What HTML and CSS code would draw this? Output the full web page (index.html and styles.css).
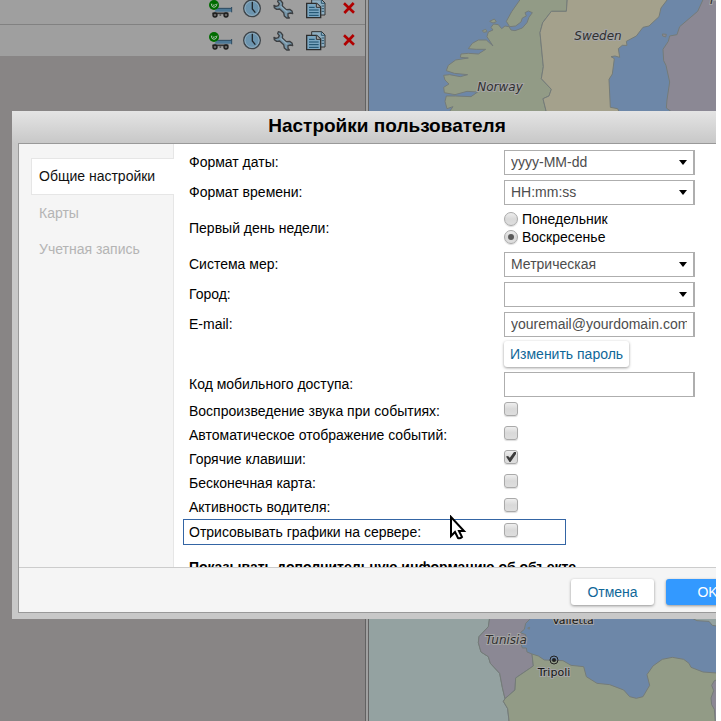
FILE: index.html
```html
<!DOCTYPE html>
<html lang="ru">
<head>
<meta charset="utf-8">
<title>Настройки пользователя</title>
<link rel="stylesheet" href="styles.css">
</head>
<body>
<svg class="defs" aria-hidden="true">
  <symbol id="i-truck" viewBox="0 0 96 93">
    <path d="M28 56l8-11h42v-3h3v14z" fill="#4d7896"/>
    <path d="M38 46h42M80 42v16" stroke="#304b5f" stroke-width="3"/>
    <path d="M22 61h48" stroke="#333" stroke-width="5"/>
    <circle cx="30" cy="66" r="6" fill="#666" stroke="#1c1c1c" stroke-width="4"/>
    <circle cx="46" cy="66" r="3" fill="#555"/>
    <circle cx="63" cy="66" r="6" fill="#666" stroke="#1c1c1c" stroke-width="4"/>
    <circle cx="27" cy="36" r="15" fill="#006b00"/>
    <path d="M19 32q0 11 8 11t9-11M23 34l4 4 5-5" fill="none" stroke="#a9c4a9" stroke-width="3"/>
  </symbol>
  <symbol id="i-clock" viewBox="0 0 96 93">
    <circle cx="45" cy="46" r="25" fill="#6c94ae" stroke="#3e4449" stroke-width="4"/>
    <circle cx="45" cy="46" r="21" fill="none" stroke="#8facbe" stroke-width="3"/>
    <path d="M46 26v22l9 11" fill="none" stroke="#20272c" stroke-width="4"/>
  </symbol>
  <symbol id="i-wrench" viewBox="0 0 96 93">
    <path d="M28 20l7 2 6 8-1 9 12 11 10-1 7 5 2 8-7-2-7 2v8l4 5-8 0-7-6-2-10-12-11-9 1-7-5-1-7 6 3 7-2 3-6-5-6z" fill="#7695a8" stroke="#3c3f42" stroke-width="4" stroke-linejoin="round"/>
    <path d="M35 40l20 18" stroke="#8fadbe" stroke-width="4"/>
  </symbol>
  <symbol id="i-docs" viewBox="0 0 96 93">
    <path d="M32 20h30l10 10v36H32z" fill="#8fafc2" stroke="#343434" stroke-width="3"/>
    <path d="M61 20v11h11M62 39h7M62 47h7M62 55h7" fill="none" stroke="#2d566d" stroke-width="3"/>
    <path d="M17 31h30l12 11v32H17z" fill="#7aa6c1" stroke="#2d2d2d" stroke-width="4"/>
    <path d="M46 31v12h12" fill="#aaa" stroke="#333" stroke-width="3"/>
    <path d="M24 43h17M24 51h29M24 59h29M24 67h29" stroke="#164a68" stroke-width="3"/>
  </symbol>
  <symbol id="i-delete" viewBox="0 0 96 93">
    <path d="M33 31l30 28M62 30L34 60" stroke="#b00000" stroke-width="8"/>
  </symbol>
</svg>

<div class="app">
  <section class="units">
    <div class="unit">
      <button class="tool" aria-label="Состояние"><svg><use href="#i-truck"/></svg></button>
      <button class="tool" aria-label="История"><svg><use href="#i-clock"/></svg></button>
      <button class="tool" aria-label="Свойства"><svg><use href="#i-wrench"/></svg></button>
      <button class="tool" aria-label="Копировать"><svg><use href="#i-docs"/></svg></button>
      <button class="tool" aria-label="Удалить"><svg><use href="#i-delete"/></svg></button>
    </div>
    <div class="unit">
      <button class="tool" aria-label="Состояние"><svg><use href="#i-truck"/></svg></button>
      <button class="tool" aria-label="История"><svg><use href="#i-clock"/></svg></button>
      <button class="tool" aria-label="Свойства"><svg><use href="#i-wrench"/></svg></button>
      <button class="tool" aria-label="Копировать"><svg><use href="#i-docs"/></svg></button>
      <button class="tool" aria-label="Удалить"><svg><use href="#i-delete"/></svg></button>
    </div>
  </section>
  <div class="splitter"></div>
  <section class="map">
    <svg viewBox="0 0 347 721" preserveAspectRatio="xMinYMin slice">
      <rect width="347" height="721" fill="#6d87a8"/>
      <g transform="translate(-8 0) scale(.33333)" stroke="#747b78" stroke-width="3" stroke-linejoin="round">
        <path fill="#929b86" d="M480-5L452 35L436 64L446 80L464 78L480 66L484 54L496 48L492 38L502 33L514 38L504 52L498 68L484 84L462 92L450 90L444 80L432 78L422 86L412 74L398 72L390 82L396 90L382 96L378 110L396 138L376 120L352 120L334 130L322 146L346 148L374 148L352 162L322 160L300 162L298 172L322 174L284 180L262 196L256 212L280 220L320 224L298 230L266 224L248 226L252 240L264 252L248 262L250 278L282 284L318 274L350 276L330 290L284 288L256 288L252 304L258 326L276 320L262 340H557L546 296L564 288L571 268L541 236L547 200L537 98L545 68L571 34H616L619-5z"/>
        <path fill="#929b86" d="M386 64l14-7 6 8-10 4zM364 92l10-4 4 7-10 2z"/>
        <path fill="#a4a18c" d="M619-5L616 34H571L545 68L537 98L547 200L541 236L571 268L564 288L546 296L557 340H776L770 326L748 322L744 238L754 222L760 176L750 170L762 168L776 172L772 146L784 136L798 136L796 124L826 108L846 82L864 78L894 50L900 24L922-5z"/>
        <path fill="#8b8894" d="M1028-5L1010 34L956 80L948 104L926 108L922 124L906 148L908 182L915 196L926 246L918 300L916 324L938 340H1080V-5z"/>
        <path fill="#8b8894" d="M904 102l12 1-2 8-9-3z"/>
      </g>
      <g transform="translate(-8 560) scale(.33333)" stroke="#747b78" stroke-width="3" stroke-linejoin="round">
        <path fill="#94a2a1" d="M0 160H388L382 200L354 230L352 248L360 276L382 290L388 310L416 340L424 382L432 416L427 424L440 446L446 500H0z"/>
        <path fill="#8b8894" d="M388 160L382 200L354 230L352 248L360 276L382 290L388 310L416 340L424 382L432 416L462 390L464 354L517 318L513 282L498 276L496 264L484 264L480 252L496 242L494 224L478 218L490 208L494 190L506 178V160z"/>
        <path fill="#929b86" d="M513 282L532 288L550 300L606 302L630 316L668 320L676 350L708 370L746 374L788 390L806 410L826 415L846 410L866 376L858 344L876 318L904 298L934 292L968 298L984 310L990 322L1026 336L1080 340V500H446L440 446L427 424L432 416L462 390L464 354L517 318z"/>
        <path fill="#94a2a1" d="M984 170L1008 182L1044 184L1054 196L1080 200V160H984z"/>
        <path fill="#8b8894" d="M1080 356L1060 362L1052 376L1058 392L1050 414L1052 434L1060 448L1064 500H1080z"/>
        <path fill="#8b8894" d="M500 204l6-2-2 6z"/>
      </g>
      <g class="places">
        <text class="country" x="131" y="91">Norway</text>
        <text class="country" x="229" y="40">Sweden</text>
        <text class="country" x="363" y="4">Finland</text>
        <text class="country" x="137" y="644">Tunisia</text>
        <text class="city" x="204" y="624">Valletta</text>
        <text class="city" x="185" y="676">Tripoli</text>
      </g>
      <circle cx="185" cy="660" r="4" fill="none" stroke="#222"/>
      <circle cx="185" cy="660" r="2" fill="#222"/>
    </svg>
  </section>

  <form class="dialog" role="dialog" aria-labelledby="dialog-title">
    <h1 class="dialog-title" id="dialog-title">Настройки пользователя</h1>
    <div class="panel">
      <div class="content">
        <nav class="tabs">
          <a class="tab active" href="#general">Общие настройки</a>
          <a class="tab" href="#maps">Карты</a>
          <a class="tab" href="#account">Учетная запись</a>
        </nav>
        <div class="fields" id="general">
          <div class="row">
            <label for="date">Формат даты:</label>
            <span class="select"><select id="date"><option>yyyy-MM-dd</option></select></span>
          </div>
          <div class="row">
            <label for="time">Формат времени:</label>
            <span class="select"><select id="time"><option>HH:mm:ss</option></select></span>
          </div>
          <div class="row row-radios" role="radiogroup" aria-labelledby="weekday">
            <span id="weekday">Первый день недели:</span>
            <div class="radios">
              <label><input type="radio" name="day">Понедельник</label>
              <label><input type="radio" name="day" checked>Воскресенье</label>
            </div>
          </div>
          <div class="row">
            <label for="units">Система мер:</label>
            <span class="select"><select id="units"><option>Метрическая</option></select></span>
          </div>
          <div class="row">
            <label for="city">Город:</label>
            <span class="select"><select id="city"><option></option></select></span>
          </div>
          <div class="row">
            <label for="email">E-mail:</label>
            <input class="text" id="email" type="text" value="youremail@yourdomain.com">
          </div>
          <div class="row">
            <span></span>
            <button class="button change" type="button">Изменить пароль</button>
          </div>
          <div class="row">
            <label for="code">Код мобильного доступа:</label>
            <input class="text" id="code" type="text">
          </div>
          <div class="row check"><label for="c1">Воспроизведение звука при событиях:</label><input id="c1" type="checkbox"></div>
          <div class="row check"><label for="c2">Автоматическое отображение событий:</label><input id="c2" type="checkbox"></div>
          <div class="row check"><label for="c3">Горячие клавиши:</label><input id="c3" type="checkbox" checked></div>
          <div class="row check"><label for="c4">Бесконечная карта:</label><input id="c4" type="checkbox"></div>
          <div class="row check"><label for="c5">Активность водителя:</label><input id="c5" type="checkbox"></div>
          <div class="row check marked"><label for="c6">Отрисовывать графики на сервере:</label><input id="c6" type="checkbox"></div>
          <h2 class="subtitle">Показывать дополнительную информацию об объекте</h2>
        </div>
      </div>
      <div class="footer">
        <button class="button" type="button">Отмена</button>
        <button class="button primary" type="button">OK</button>
      </div>
    </div>
  </form>

  <svg class="pointer" viewBox="0 0 18 25" aria-hidden="true">
    <path d="M2 2v19l4-4 3 6q2 1 4-1l-3-6h5z" fill="#fff" stroke="#000" stroke-width="2"/>
  </svg>
</div>
</body>
</html>
```
FILE: styles.css
```css
* { box-sizing: border-box; }

body {
  margin: 0;
  padding-right: 5px;
  background: #fff;
  color: #000;
  font: 14px/18px "Liberation Sans", Arial, sans-serif;
}

button, input, select { font: inherit; margin: 0; }

.defs { display: none; }

.app {
  position: relative;
  display: flex;
  height: 100vh;
  overflow: hidden;
}

/* Unit list */
.units {
  flex: none;
  width: 365px;
  background: #888585;
}

.unit {
  display: flex;
  justify-content: flex-end;
  background: #9f9f9f;
}

.unit:first-child {
  margin-top: -7px;
  border-bottom: 1px solid #818181;
}

.tool {
  width: 32px;
  height: 31px;
  padding: 0;
  border: 0;
  background: none;
}

.tool svg { display: block; width: 32px; height: 31px; }

.splitter {
  flex: none;
  width: 4px;
  background: #a0a0a0;
  border: solid #626262;
  border-width: 0 1px;
}

/* Map */
.map { flex: 1; min-width: 0; overflow: hidden; }
.map svg { display: block; width: 100%; height: 100%; }

.places {
  font-family: "DejaVu Sans", sans-serif;
  text-anchor: middle;
  fill: #303030;
  stroke: #a5a5a5;
  stroke-width: 2px;
  paint-order: stroke;
}

.country { font-size: 12px; font-style: italic; }
.city { font-size: 11px; fill: #151515; }

/* Settings dialog */
.dialog {
  position: absolute;
  top: 111px;
  left: 12px;
  width: 750px;
  padding: 0 6px 6px;
  background: linear-gradient(#e4e4e4, #c8c8c8 32px);
}

.dialog-title {
  margin: 0;
  font-size: 19px;
  line-height: 30px;
  height: 32px;
  text-align: center;
}

.panel { border: 1px solid #999; background: #f5f5f5; }
.content { display: flex; height: 423px; overflow: hidden; }

.tabs {
  flex: none;
  width: 155px;
  padding: 14px 0 0 12px;
  border-right: 1px solid #e6e6e6;
}

.tab {
  display: block;
  padding: 0 8px;
  line-height: 36px;
  color: #b4b4b4;
  text-decoration: none;
}

.tab.active {
  margin-right: -1px;
  border: 1px solid #e6e6e6;
  border-right: 0;
  background: #fff;
  color: #111;
  padding-left: 7px;
  line-height: 35px;
}

.fields {
  flex: 1;
  padding: 3px 9px;
  background: #fff;
}

.row {
  display: grid;
  grid-template-columns: 315px 191px;
  align-items: center;
  height: 30px;
  padding-left: 6px;
}

.row-radios { height: 42px; }

.text, .select select {
  width: 100%;
  height: 25px;
  padding: 0 6px;
  border: 1px solid #aeaeae;
  border-right-width: 2px;
  border-radius: 0;
  background: #fff;
  color: #4d4d4d;
  appearance: none;
}

.select { position: relative; }
.select select { display: block; }

.select::after {
  content: "";
  position: absolute;
  top: 10px;
  right: 8px;
  border: 4px solid transparent;
  border-top: 5px solid #000;
  pointer-events: none;
}

.radios label { display: flex; align-items: center; gap: 4px; }

input[type="radio"], input[type="checkbox"] {
  appearance: none;
  display: grid;
  place-items: center;
  width: 14px;
  height: 14px;
  border: 1px solid #aaa;
  border-radius: 3px;
  background: linear-gradient(#eee, #d9d9d9 50%, #dedede);
  box-shadow: 0 1px 1px #ddd;
}

input[type="radio"] { border-radius: 50%; }

input[type="radio"]:checked::before {
  content: "";
  width: 6px;
  height: 6px;
  border-radius: 50%;
  background: #5a5a5a;
}

input[type="checkbox"]:checked::before {
  content: "";
  width: 10px;
  height: 10px;
  background: #3c3c3c;
  clip-path: polygon(0 45%, 20% 40%, 38% 58%, 80% 0, 100% 0, 100% 20%, 45% 100%, 35% 100%);
}

.check { height: 24px; }

.check input { margin-bottom: 4px; }

.marked {
  width: 383px;
  height: 26px;
  padding-left: 5px;
  border: 1px solid #3465a4;
}

.subtitle {
  margin: 13px 6px 0;
  font-size: 14px;
  line-height: 18px;
  white-space: nowrap;
}

.button {
  height: 26px;
  min-width: 83px;
  padding: 0 6px;
  border: 0;
  border-radius: 3px;
  background: #fff;
  color: #106799;
  box-shadow: 0 1px 3px rgba(0, 0, 0, .4);
}

.button.primary { background: #3399ff; color: #fff; }
.change { justify-self: start; }

.footer {
  display: flex;
  justify-content: flex-end;
  gap: 12px;
  height: 45px;
  padding: 11px 6px 0;
  border-top: 1px solid #ccc;
}

.pointer {
  position: absolute;
  top: 515px;
  left: 449px;
  width: 18px;
  height: 25px;
}
```
